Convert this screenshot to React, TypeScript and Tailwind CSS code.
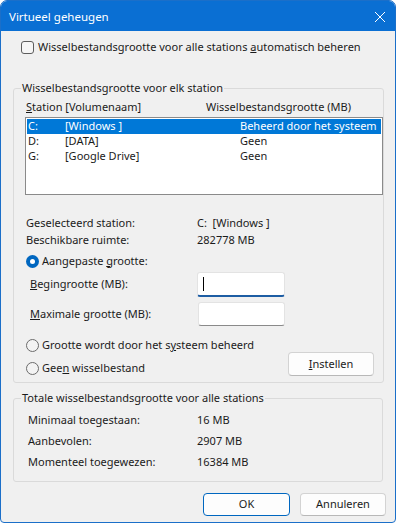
import React from 'react'

const font = "font-['Noto_Sans','Open_Sans',sans-serif]"

function Checkbox() {
  return <span className="w-[13px] h-[13px] rounded-[3px] border border-[#5d5d5d] bg-[#f6f6f6] shrink-0" />
}

function Radio({ checked }: { checked?: boolean }) {
  if (checked) {
    return (
      <span className="w-[13px] h-[13px] rounded-full bg-[#0067c0] flex items-center justify-center shrink-0">
        <span className="w-[5px] h-[5px] rounded-full bg-white" />
      </span>
    )
  }
  return <span className="w-[13px] h-[13px] rounded-full border border-[#6b6b6b] bg-[#f3f3f3] shrink-0" />
}

const drives = [
  { id: 'C:', name: '[Windows ]', size: 'Beheerd door het systeem', selected: true },
  { id: 'D:', name: '[DATA]', size: 'Geen' },
  { id: 'G:', name: '[Google Drive]', size: 'Geen' },
]

export default function App() {
  return (
    <div className={`w-[396px] h-[523px] flex flex-col bg-[#f0f0f0] border border-[#1b6fc9] rounded-t-[7px] rounded-b-[4px] overflow-hidden text-[11px] whitespace-nowrap text-[#1b1b1b] ${font}`}>
      {/* title bar */}
      <div className="h-[30px] shrink-0 bg-[#0a6fd3] flex items-center justify-between pl-[8px] pr-[9px] text-white">
        <span className="text-[11.5px] leading-[16px] mt-[2px]">Virtueel geheugen</span>
        <svg width="12" height="12" viewBox="0 0 12 12" className="mt-[2px]">
          <path d="M1 1 L11 11 M11 1 L1 11" stroke="white" strokeWidth="1" />
        </svg>
      </div>

      <div className="flex flex-col px-[12px] pt-[8px]">
        <div className="h-[16px] flex items-center gap-[4px] pl-[8px]">
          <Checkbox />
          <span>Wisselbestandsgrootte voor alle stations <u>a</u>utomatisch beheren</span>
        </div>

        {/* per station */}
        <fieldset className="mt-[25px] border border-[#dadada] rounded-[3px] pb-[6px]">
          <legend className="ml-[7px] px-[1px] leading-[16px]">Wisselbestandsgrootte voor elk station</legend>
          <div className="flex h-[16px] items-center mt-[3px] pl-[12px]">
            <span className="w-[180px]"><u>S</u>tation [Volumenaam]</span>
            <span>Wisselbestandsgrootte (MB)</span>
          </div>
          <div className="mt-[2px] ml-[11px] w-[358px] h-[78px] bg-white border border-[#8a8a8a] p-[1px]">
            {drives.map(d => (
              <div
                key={d.id}
                className={`h-[15px] flex items-center pl-[1px] ${d.selected ? 'bg-[#0078d7] text-white' : ''}`}
              >
                <span className="w-[37px]">{d.id}</span>
                <span className="w-[175px]">{d.name}</span>
                <span>{d.size}</span>
              </div>
            ))}
          </div>

          <div className="flex h-[16px] items-center mt-[20px] pl-[12px]">
            <span className="w-[171px]">Geselecteerd station:</span>
            <span>C:&nbsp;&nbsp;[Windows ]</span>
          </div>
          <div className="flex h-[16px] items-center mt-[1px] pl-[12px]">
            <span className="w-[171px]">Beschikbare ruimte:</span>
            <span>282778 MB</span>
          </div>

          <div className="flex h-[16px] items-center gap-[3px] mt-[5px] pl-[12px]">
            <Radio checked />
            <span>Aangepaste <u>g</u>rootte:</span>
          </div>

          <div className="flex items-center mt-[3px] pl-[16px]">
            <span className="w-[167px]"><u>B</u>egingrootte (MB):</span>
            <div className="w-[88px] h-[25px] bg-white rounded-[3px] border border-[#e3e3e3] border-b-2 border-b-[#1d5da3] flex items-center pl-[5px]">
              <span className="w-[1px] h-[14px] bg-black" />
            </div>
          </div>
          <div className="flex items-center mt-[5px] pl-[16px]">
            <span className="w-[168px]"><u>M</u>aximale grootte (MB):</span>
            <div className="w-[87px] h-[24px] bg-white rounded-[3px] border border-[#e3e3e3] border-b-[#8a8a8a]" />
          </div>

          <div className="flex items-end justify-between mt-[11px] pl-[12px] pr-[9px]">
            <div className="flex flex-col gap-[7px]">
              <div className="flex h-[16px] items-center gap-[3px]">
                <Radio />
                <span>Grootte wordt door het s<u>y</u>steem beheerd</span>
              </div>
              <div className="flex h-[16px] items-center gap-[3px]">
                <Radio />
                <span>Gee<u>n</u> wisselbestand</span>
              </div>
            </div>
            <button className="w-[86px] h-[24px] bg-[#fdfdfd] border border-[#d3d3d3] border-b-[#b8b8b8] rounded-[4px] flex items-center justify-center">
              <span><u>I</u>nstellen</span>
            </button>
          </div>
        </fieldset>

        {/* totals */}
        <fieldset className="mt-[7px] border border-[#dadada] rounded-[3px] pb-[11px]">
          <legend className="ml-[7px] px-[1px] leading-[16px]">Totale wisselbestandsgrootte voor alle stations</legend>
          {[
            ['Minimaal toegestaan:', '16 MB'],
            ['Aanbevolen:', '2907 MB'],
            ['Momenteel toegewezen:', '16384 MB'],
          ].map(([label, value], i) => (
            <div key={label} className={`flex h-[16px] items-center pl-[14px] ${i === 0 ? 'mt-[6px]' : 'mt-[5px]'}`}>
              <span className="w-[169px]">{label}</span>
              <span>{value}</span>
            </div>
          ))}
        </fieldset>

        <div className="flex justify-end gap-[10px] mt-[11px] mr-[-3px]">
          <button className="w-[87px] h-[23px] bg-[#fdfdfd] border border-[#0067c0] rounded-[4px] flex items-center justify-center">
            OK
          </button>
          <button className="w-[86px] h-[23px] bg-[#fdfdfd] border border-[#d3d3d3] border-b-[#b8b8b8] rounded-[4px] flex items-center justify-center">
            Annuleren
          </button>
        </div>
      </div>
    </div>
  )
}
